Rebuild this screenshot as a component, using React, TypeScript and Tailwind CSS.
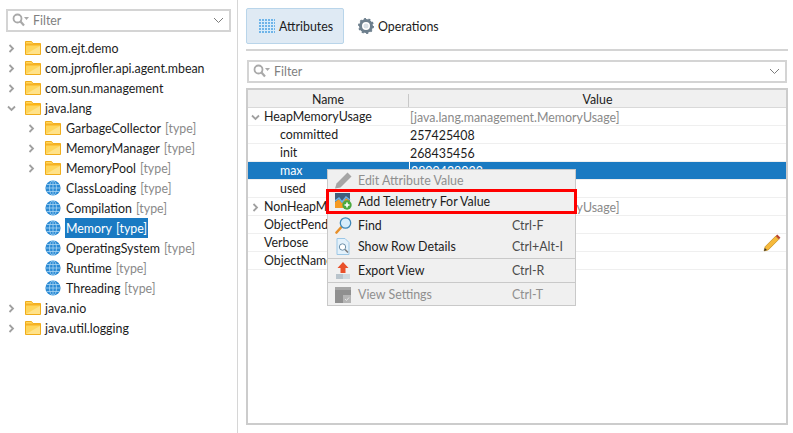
import React from "react";

const font = { fontFamily: '"Lato","Noto Sans",sans-serif' };

function Chevron({ open, className = "" }: { open?: boolean; className?: string }) {
  return (
    <svg width="9" height="9" viewBox="0 0 9 9" className={className} fill="none" stroke="#a0a0a0" strokeWidth="1.8">
      {open ? <path d="M1 2.500 4.500 6 8 2.500" /> : <path d="M2.500 1 6 4.500 2.500 8" />}
    </svg>
  );
}

function Folder({ open }: { open?: boolean }) {
  return (
    <svg width="16" height="14" viewBox="0 0 16 14" className="shrink-0">
      <path d="M.5 13.500V.5h6l1.500 2h7.500v11z" fill="#ffd65c" stroke="#f0ad1c" />
      <path d="M1 2.500h14v2H1z" fill={open ? "#fdb515" : "#f6b326"} />
      <path d="M1 13 L15 5 V13z" fill="#ffe28a" />
    </svg>
  );
}

function Globe() {
  return (
    <svg width="16" height="16" viewBox="0 0 16 16" className="shrink-0">
      <circle cx="8" cy="8" r="7.600" fill="#2a8ad4" />
      <g fill="none" stroke="#a8d4f2" strokeWidth=".8">
        <ellipse cx="8" cy="8" rx="3.500" ry="7.500" />
        <path d="M8 .5v15M.5 8h15M1.500 4.500h13M1.500 11.500h13" />
      </g>
    </svg>
  );
}

function FilterBox({ className = "" }: { className?: string }) {
  return (
    <div className={`flex items-center h-[23px] border-2 border-[#d4d4d4] bg-white ${className}`}>
      <svg width="18" height="15" viewBox="0 0 18 15" className="ml-1 shrink-0" fill="none">
        <circle cx="5.500" cy="5.500" r="4" stroke="#a9a9a9" strokeWidth="1.800" />
        <path d="M8.500 8.500 12 12.500" stroke="#a9a9a9" strokeWidth="2.200" />
        <path d="M12 4h5l-2.500 3z" fill="#a9a9a9" />
      </svg>
      <span className="ml-[3px] pt-[2px] text-[12.400px] text-[#7f7f7f] flex-1 leading-none">Filter</span>
      <svg width="11" height="7" viewBox="0 0 11 7" className="mr-[5px]" fill="none" stroke="#7c7c7c">
        <path d="M1 1 5.500 5.500 10 1" />
      </svg>
    </div>
  );
}

type Node = { name: string; type?: boolean; level: 0 | 1; icon: "folder" | "open" | "globe"; arrow?: "closed" | "open"; selected?: boolean };

const tree: Node[] = [
  { name: "com.ejt.demo", level: 0, icon: "folder", arrow: "closed" },
  { name: "com.jprofiler.api.agent.mbean", level: 0, icon: "folder", arrow: "closed" },
  { name: "com.sun.management", level: 0, icon: "folder", arrow: "closed" },
  { name: "java.lang", level: 0, icon: "open", arrow: "open" },
  { name: "GarbageCollector", type: true, level: 1, icon: "folder", arrow: "closed" },
  { name: "MemoryManager", type: true, level: 1, icon: "folder", arrow: "closed" },
  { name: "MemoryPool", type: true, level: 1, icon: "folder", arrow: "closed" },
  { name: "ClassLoading", type: true, level: 1, icon: "globe" },
  { name: "Compilation", type: true, level: 1, icon: "globe" },
  { name: "Memory", type: true, level: 1, icon: "globe", selected: true },
  { name: "OperatingSystem", type: true, level: 1, icon: "globe" },
  { name: "Runtime", type: true, level: 1, icon: "globe" },
  { name: "Threading", type: true, level: 1, icon: "globe" },
  { name: "java.nio", level: 0, icon: "folder", arrow: "closed" },
  { name: "java.util.logging", level: 0, icon: "folder", arrow: "closed" },
];

function TreeRow({ n }: { n: Node }) {
  return (
    <div className={`flex items-center h-5 ${n.level === 1 ? "pl-[27px]" : "pl-[7px]"}`}>
      <span className="w-[18px] shrink-0">{n.arrow && <Chevron open={n.arrow === "open"} />}</span>
      <span className={`${n.level === 1 ? "w-[20px]" : "w-[19px]"} shrink-0`}>
        {n.icon === "globe" ? <Globe /> : <Folder open={n.icon === "open"} />}
      </span>
      <span className={`h-5 pt-[2px] flex items-center px-[1px] whitespace-nowrap text-[12.400px] ${n.selected ? "bg-[#1a7ac2] text-white" : "text-[#1c1c1c]"}`}>
        {n.name}
        {n.type && <span className={`ml-1 ${n.selected ? "text-white" : "text-[#8a8a8a]"}`}>[type]</span>}
      </span>
    </div>
  );
}

type Row = { name: string; value?: string; gray?: boolean; indent?: boolean; arrow?: "open" | "closed"; selected?: boolean; pencil?: boolean };

const rows: Row[] = [
  { name: "HeapMemoryUsage", value: "[java.lang.management.MemoryUsage]", gray: true, arrow: "open" },
  { name: "committed", value: "257425408", indent: true },
  { name: "init", value: "268435456", indent: true },
  { name: "max", value: "2809438032", indent: true, selected: true },
  { name: "used", indent: true },
  { name: "NonHeapMemoryUsage", value: "[java.lang.management.MemoryUsage]", gray: true, arrow: "closed" },
  { name: "ObjectPendingFinalizationCount" },
  { name: "Verbose", pencil: true },
  { name: "ObjectName" },
];

function TableRow({ r }: { r: Row }) {
  return (
    <div className={`flex h-[18px] items-center text-[12.400px] border-b border-[#efefef] ${r.selected ? "bg-[#1a7ac2] text-white" : "text-[#1c1c1c]"}`}>
      <div className={`w-[161px] h-full pt-[1px] shrink-0 overflow-hidden whitespace-nowrap flex items-center ${r.indent ? "pl-[32px]" : r.arrow ? "pl-[3px]" : "pl-[16px]"}`}>
        {r.arrow && <Chevron open={r.arrow === "open"} className="mr-1" />}
        {r.name}
      </div>
      <div className={`pl-[1px] h-full pt-[1px] flex-1 whitespace-nowrap ${r.gray ? "text-[#8a8a8a]" : ""} ${r.selected ? "border-l border-white" : ""}`}>{r.value}</div>
      {r.pencil && (
        <svg width="18" height="18" viewBox="0 0 17 17" className="mr-[5px]">
          <path d="M1 16l1-4L12 2l3 3L5 15z" fill="#f6b93b" stroke="#b9820f" strokeWidth=".6" />
          <path d="M12 2l1.500-1.500 3 3L15 5z" fill="#b8432c" />
          <path d="M1 16l.7-2.800 2 2z" fill="#333" />
        </svg>
      )}
    </div>
  );
}

function MenuIconEdit() {
  return (
    <svg width="17" height="17" viewBox="0 0 17 17">
      <path d="M0 16.500l1.500-5L12.500 .5l4 4-11 11z" fill="#a5a5a5" />
    </svg>
  );
}
function MenuIconTelemetry() {
  return (
    <svg width="17" height="17" viewBox="0 0 17 17">
      <rect x="0" y="0" width="15" height="15" fill="#3f5f7c" />
      <path d="M0 9l4-3 3 4 4-5 4 3v7H0z" fill="#f59a23" />
      <path d="M0 8l4-3 3 4 4-5 4 3" fill="none" stroke="#6fb4e8" strokeWidth="1.500" />
      <circle cx="12" cy="12" r="4.700" fill="#4aa93f" />
      <path d="M12 9.500v5M9.500 12h5" stroke="#fff" strokeWidth="1.600" />
    </svg>
  );
}
function MenuIconFind() {
  return (
    <svg width="17" height="17" viewBox="0 0 17 17">
      <path d="M6 10.500l-4.500 5" stroke="#e8902a" strokeWidth="2.600" strokeLinecap="round" />
      <circle cx="10.500" cy="6" r="5.200" fill="#d6ecfa" stroke="#3f88b8" strokeWidth="1.300" />
    </svg>
  );
}
function MenuIconDetails() {
  return (
    <svg width="15" height="17" viewBox="0 0 15 17">
      <path d="M1 .5h8l4 4v12H1z" fill="#e3f1fb" stroke="#9cc7e6" />
      <circle cx="6.500" cy="9" r="3.200" fill="#fff" stroke="#6b8ea8" />
      <path d="M9 11.500l3 3" stroke="#7a7a7a" strokeWidth="1.600" />
    </svg>
  );
}
function MenuIconExport() {
  return (
    <svg width="14" height="17" viewBox="0 0 14 17">
      <path d="M7 0l5.500 6H9.500v5h-5V6H1.500z" fill="#e9502a" />
      <rect x="0" y="12" width="14" height="5" fill="#b9c4cc" />
      <rect x="7" y="12" width="7" height="5" fill="#cfd8de" />
    </svg>
  );
}
function MenuIconSettings() {
  return (
    <svg width="16" height="16" viewBox="0 0 16 16">
      <rect width="16" height="16" fill="#8f8f8f" />
      <rect y="0" width="16" height="3" fill="#a5a5a5" />
      <rect x="8" y="8" width="8" height="8" fill="#b5b5b5" />
      <path d="M10 12l1.500 1.500L14 10.500" fill="none" stroke="#e5e5e5" />
    </svg>
  );
}

function MenuItem({ icon, label, shortcut, disabled, boxed }: { icon: React.ReactNode; label: string; shortcut?: string; disabled?: boolean; boxed?: boolean }) {
  return (
    <div className={`flex items-center h-[21px] text-[12.400px] ${disabled ? "text-[#8f8f8f]" : "text-[#1c1c1c]"} ${boxed ? "relative z-10 outline-[3px] outline-[#ff0000] -outline-offset-1" : ""}`}>
      <span className="w-[30px] shrink-0 flex justify-center">{icon}</span>
      <span className="w-[154px] pt-[2px] shrink-0 whitespace-nowrap">{label}</span>
      {shortcut && <span className={`pt-[2px] whitespace-nowrap ${disabled ? "" : "text-[#4a4a4a]"}`}>{shortcut}</span>}
    </div>
  );
}

export default function App() {
  return (
    <div className="relative flex w-[793px] h-[433px] overflow-hidden bg-white" style={font}>
      <div className="w-[238px] h-full shrink-0 border-r border-[#d6d6d6] pt-[9px]">
        <FilterBox className="ml-[6px] mr-[6px]" />
        <div className="mt-[6px]">
          {tree.map((n) => <TreeRow key={n.name} n={n} />)}
        </div>
      </div>
      <div className="flex-1 pl-[8px] pr-[5px] pt-[8px]">
        <div className="flex items-center h-[36px]">
          <div className="flex items-center h-full w-[98px] pl-[12px] rounded-[2px] border border-[#b9d5ea] bg-[#dfeaf4] text-[12.400px] text-[#1c1c1c]">
            <svg width="16" height="14" viewBox="0 0 16 14" className="mr-[4px] shrink-0">
              <rect width="16" height="14" fill="#6fb4e8" />
              <path d="M0 2.500h16M0 5.500h16M0 8.500h16M0 11.500h16M2.500 0v14M5.500 0v14M8.500 0v14M11.500 0v14M14.500 0v14" stroke="#d9ecfa" />
            </svg>
            <span className="pt-[3px]">Attributes</span>
          </div>
          <div className="flex items-center ml-[14px] text-[12.400px] text-[#1c1c1c]">
            <svg width="16" height="16" viewBox="0 0 16 16" className="mr-[4px] shrink-0">
              <circle cx="8" cy="8" r="5.500" fill="none" stroke="#6d7f8d" strokeWidth="3" />
              <circle cx="8" cy="8" r="7" fill="none" stroke="#6d7f8d" strokeWidth="2" strokeDasharray="2 2.400" />
              <circle cx="8" cy="8" r="2.500" fill="#d8e0e6" />
            </svg>
            <span className="pt-[3px]">Operations</span>
          </div>
        </div>
        <div className="mt-[5px] h-[2px] bg-[#d4d4d4]" />
        <FilterBox className="mt-[9px] mr-[1px] ml-[1px]" />
        <div className="mt-[5px] h-[337px] border-2 border-[#cccccc] bg-white">
          <div className="flex h-[18px] pt-[4px] items-center bg-[#f0f0f0] border-b border-[#d9d9d9] text-[12.400px] text-[#1c1c1c]">
            <div className="w-[160px] text-center">Name</div>
            <div className="flex-1 h-full flex items-center justify-center border-l border-[#c8c8c8]">Value</div>
          </div>
          {rows.map((r) => <TableRow key={r.name} r={r} />)}
        </div>
      </div>
      <div className="absolute left-[327px] top-[169px] w-[249px] h-[137px] bg-[#f0f0f0] border border-[#c9c9c9]">
        <MenuItem icon={<MenuIconEdit />} label="Edit Attribute Value" disabled />
        <MenuItem icon={<MenuIconTelemetry />} label="Add Telemetry For Value" boxed />
        <div className="h-[3px]" />
        <MenuItem icon={<MenuIconFind />} label="Find" shortcut="Ctrl-F" />
        <MenuItem icon={<MenuIconDetails />} label="Show Row Details" shortcut="Ctrl+Alt-I" />
        <div className="h-px bg-[#c9c9c9] my-[1px]" />
        <MenuItem icon={<MenuIconExport />} label="Export View" shortcut="Ctrl-R" />
        <div className="h-px bg-[#c9c9c9] my-[1px]" />
        <MenuItem icon={<MenuIconSettings />} label="View Settings" shortcut="Ctrl-T" disabled />
      </div>
    </div>
  );
}
